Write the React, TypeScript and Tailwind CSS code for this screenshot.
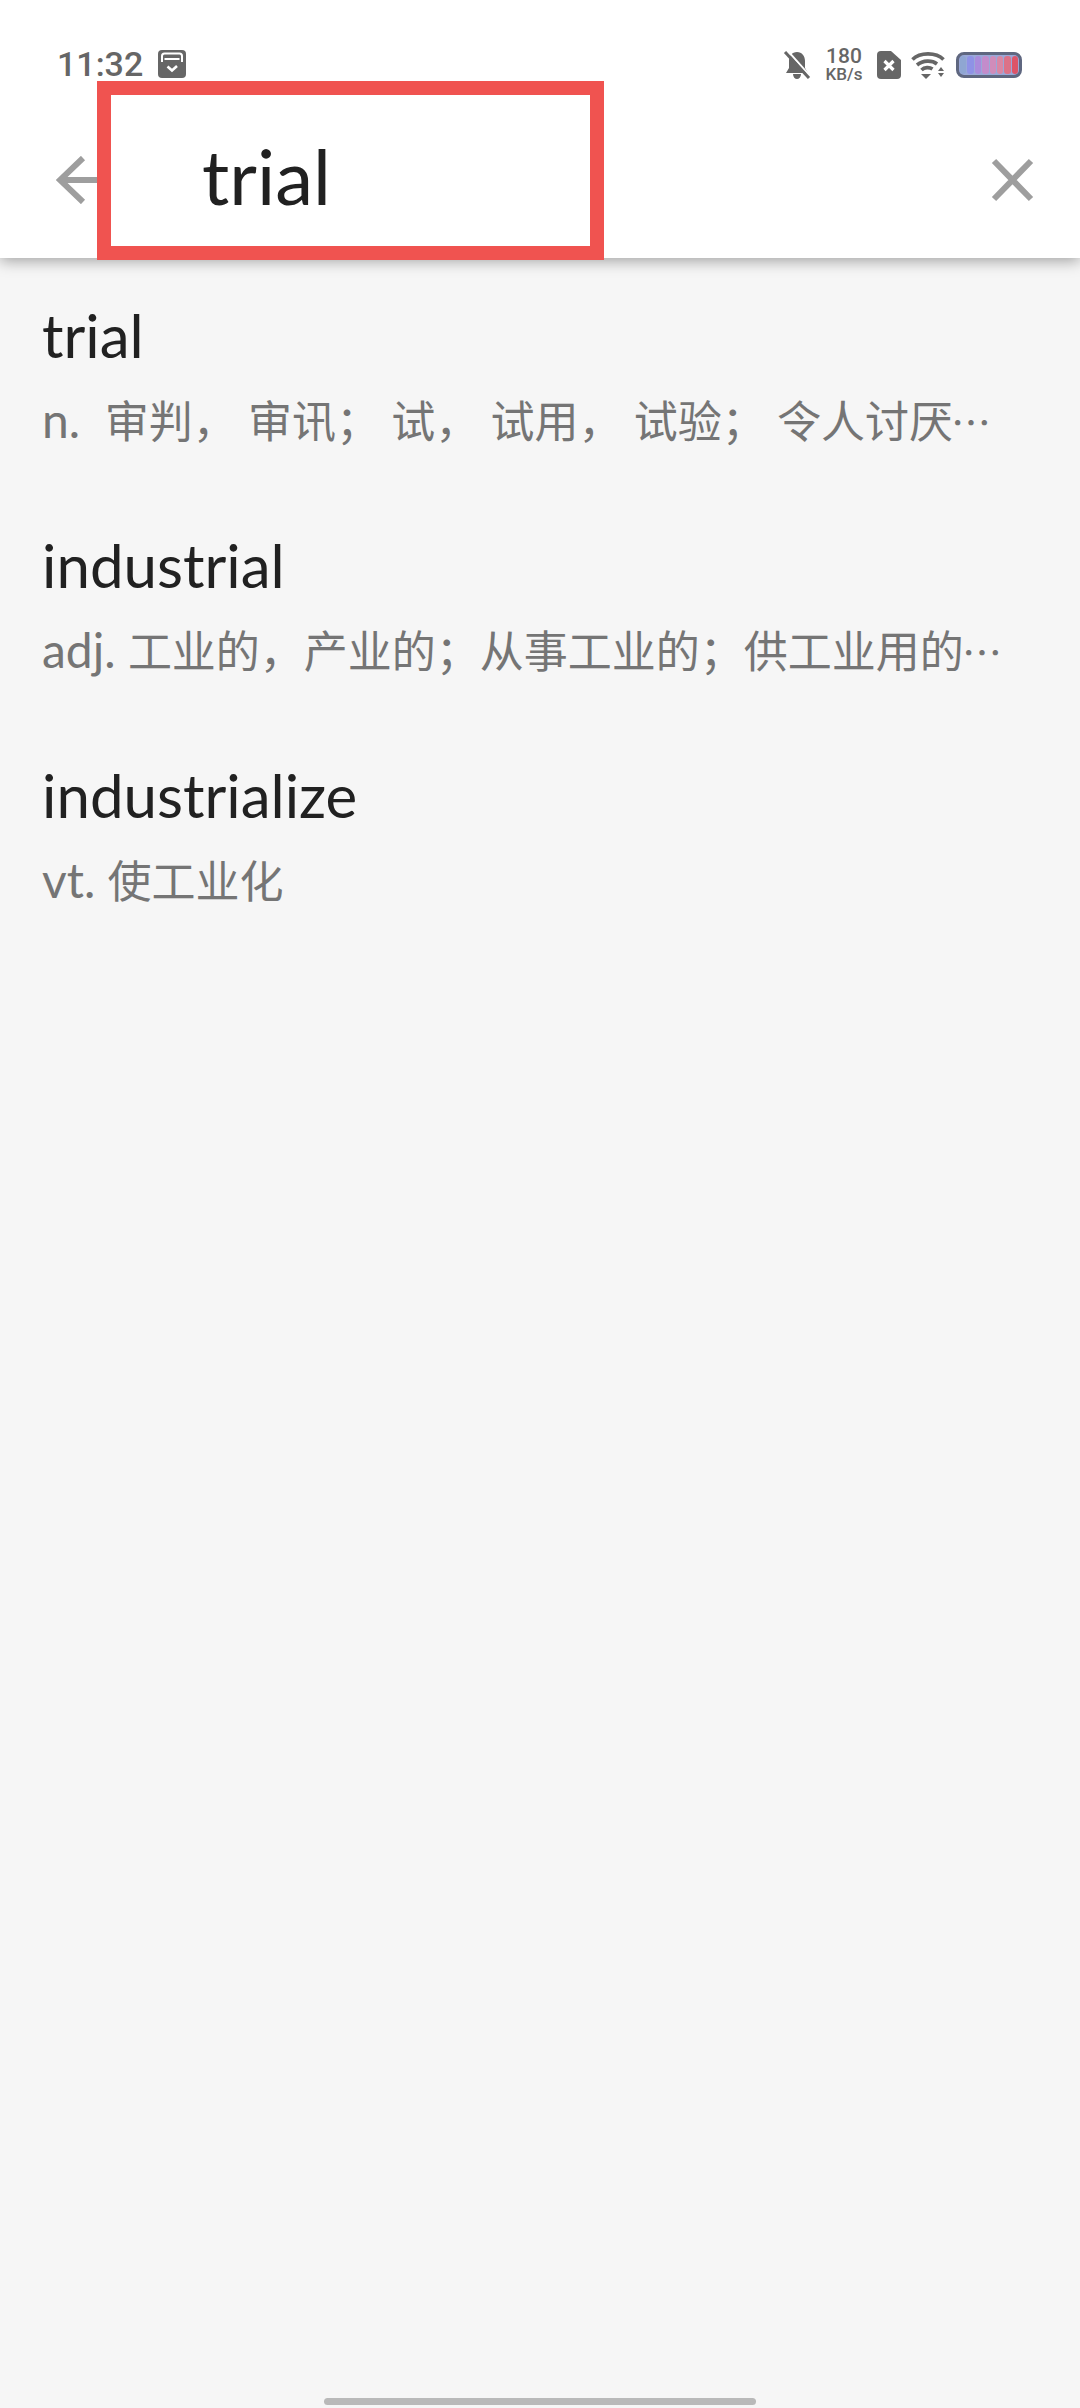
const cjk = "font-['Lato','Noto_Sans_CJK_SC',sans-serif]";
const bands = ["#8fa6d2", "#8f92e6", "#a98bdc", "#c38ccb", "#d08cba", "#d987a4", "#dc7288", "#dd5468"];

function Row({ word, prefix, def, more }: { word: string; prefix: string; def: string; more?: boolean }) {
  return (
    <div className="flex h-[230px] flex-col px-[42px]">
      <div className="mt-[42px] h-[70px] text-[60px] leading-[70px] text-[#212121]">{word}</div>
      <div className="mt-[20px] flex h-[60px] items-baseline text-[44px] leading-[60px] whitespace-pre text-[#757575]">
        <span className="text-[48px]">{prefix}</span>
        <span>{def}</span>
        {more && <span className="ml-[-2px] font-['Noto_Sans_CJK_SC',sans-serif] text-[40px]">⋯</span>}
      </div>
    </div>
  );
}

export default function App() {
  return (
    <div className={`relative flex h-[2408px] w-[1080px] flex-col overflow-hidden bg-[#f6f6f6] ${cjk}`}>
      <header className="relative z-10 flex h-[258px] flex-col bg-white shadow-[0_3px_14px_rgba(0,0,0,0.35)]">
        <div className="flex h-[102px] items-start justify-between pl-[57px] pr-[58px] pt-[48px]">
          <div className="flex h-[32px] items-center gap-[15px]">
            <span className="font-['Roboto',sans-serif] text-[34px] leading-[32px] font-medium text-[#666666]">11:32</span>
            <svg width="28" height="28" viewBox="0 0 28 28">
              <rect width="28" height="28" rx="4" fill="#666" />
              <path d="M4 12V6a2.5 2.5 0 0 1 2.5-2.5h15A2.5 2.5 0 0 1 24 6v6" fill="none" stroke="#fff" strokeWidth="2" />
              <path d="M6.5 9h15" stroke="#fff" strokeWidth="2" />
              <path d="M9.5 16.5l4.5 4 5-4.5" fill="none" stroke="#fff" strokeWidth="2.6" />
            </svg>
          </div>
          <div className="flex h-[34px] items-center">
            <svg width="28" height="28" viewBox="0 0 28 28">
              <path d="M14 1c-5 0-8 4-8 9v7l-3 5h22l-3-5v-7c0-5-3-9-8-9z M10 23c0 3 2 5 4 5s4-2 4-5z" fill="#666" />
              <path d="M4 -1l24 27" stroke="#fff" strokeWidth="2" />
              <path d="M2 1l24 26" stroke="#666" strokeWidth="3" />
            </svg>
            <div className="ml-[13px] flex w-[40px] flex-col items-center font-['Roboto',sans-serif] text-[#666666]">
              <span className="text-[21px] leading-[19px] font-medium">180</span>
              <span className="text-[17px] leading-[17px] font-medium">KB/s</span>
            </div>
            <svg className="ml-[13px]" width="24" height="28" viewBox="0 0 24 28">
              <path d="M4 0h10l10 9v15a4 4 0 0 1-4 4H4a4 4 0 0 1-4-4V4a4 4 0 0 1 4-4z" fill="#666" />
              <path d="M7.5 10l9 9M16.5 10l-9 9" stroke="#fff" strokeWidth="3.2" />
            </svg>
            <svg className="ml-[10px]" width="34" height="28" viewBox="0 0 34 28">
              <path d="M1.5 8.5C9 1 25 1 32.5 8.5" fill="none" stroke="#666" strokeWidth="3.6" />
              <path d="M6 14c6-5 15-5 20 -1" fill="none" stroke="#666" strokeWidth="3.6" />
              <path d="M10.5 19c3-3 8-3 11 -1" fill="none" stroke="#666" strokeWidth="3.6" />
              <path d="M10 23h10l-5 5z" fill="#666" />
              <path d="M27 20l3-4 3 4zM27 22h6l-3 4z" fill="#666" />
            </svg>
            <div className="ml-[11px] flex h-[26px] w-[66px] items-stretch gap-[1px] overflow-hidden rounded-[8px] border-[3px] border-[#5f6780] bg-[#9aa8d8] px-[1px] py-[1px]">
              {bands.map((c) => (
                <div key={c} className="flex-1 rounded-[3px]" style={{ backgroundColor: c }} />
              ))}
            </div>
          </div>
        </div>
        <div className="flex flex-1 items-center justify-between pl-[56px] pr-[44px]">
          <svg width="48" height="48" viewBox="0 0 48 48" fill="none" stroke="#9e9e9e" strokeWidth="6">
            <path d="M27 2L4 24l23 22M4 24h44" />
          </svg>
          <svg width="48" height="48" viewBox="0 0 48 48" fill="none" stroke="#9e9e9e" strokeWidth="6">
            <path d="M6 5l37 38M43 5L6 43" />
          </svg>
        </div>
      </header>

      <main className="flex flex-col">
        <Row word="trial" prefix="n.  " def="审判， 审讯； 试， 试用， 试验； 令人讨厌" more />
        <Row word="industrial" prefix="adj. " def="工业的，产业的；从事工业的；供工业用的" more />
        <Row word="industrialize" prefix="vt. " def="使工业化" />
      </main>

      <div className="absolute left-[97px] top-[81px] z-20 flex h-[179px] w-[507px] items-center border-[14px] border-[#f05350] bg-white pl-[91px] pt-[10px]">
        <span className="text-[76px] leading-none text-[#212121]">trial</span>
      </div>

      <div className="absolute bottom-[3px] left-[324px] h-[7px] w-[432px] rounded-full bg-[#b9b9b9]" />
    </div>
  );
}
